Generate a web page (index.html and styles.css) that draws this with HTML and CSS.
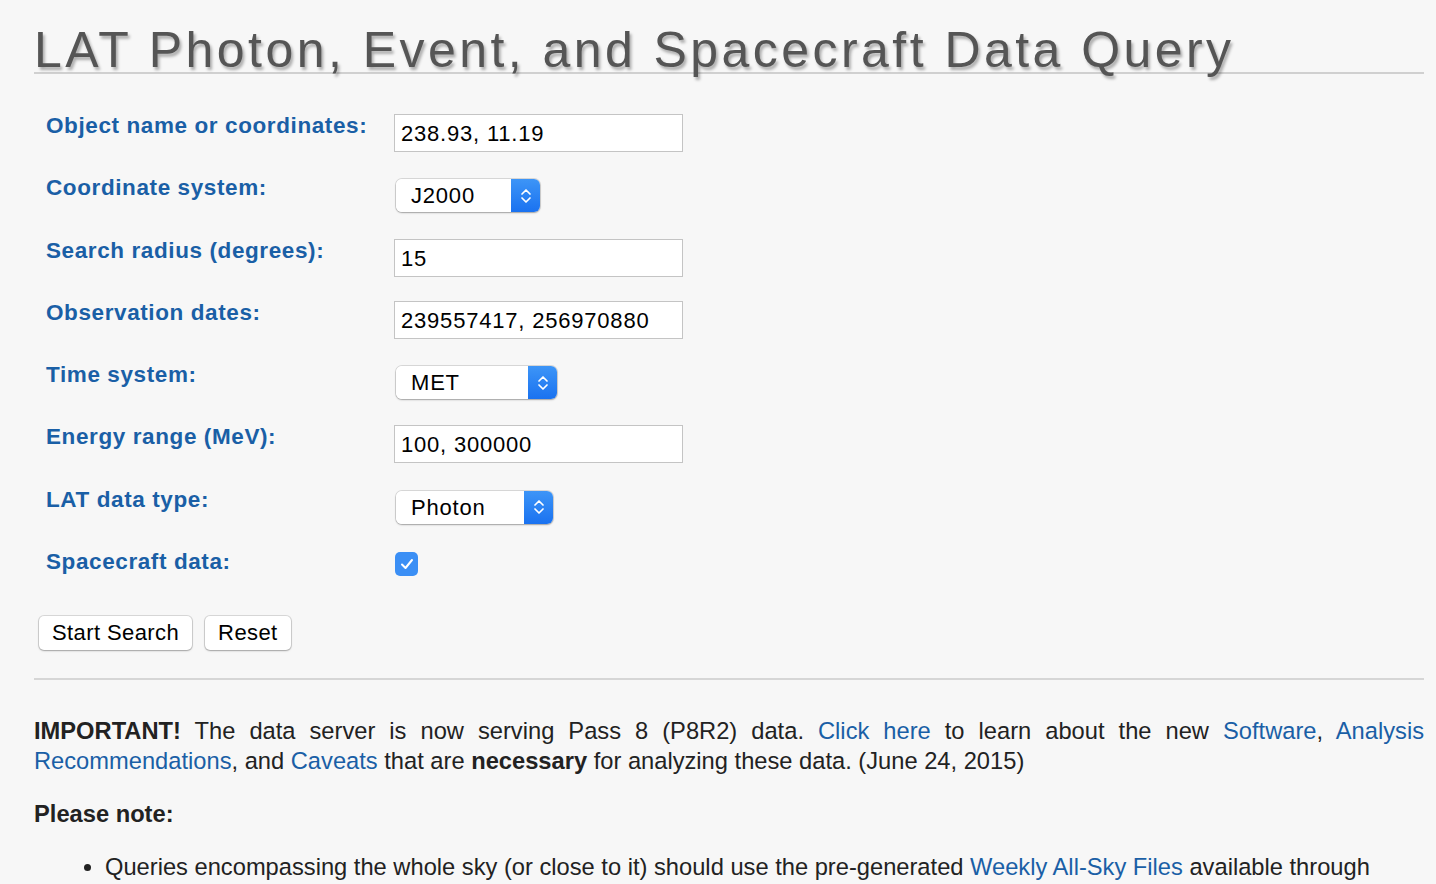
FILE: index.html
```html
<!DOCTYPE html>
<html>
<head>
<meta charset="utf-8">
<title>LAT Data Query</title>
<link rel="stylesheet" href="styles.css">
</head>
<body>
<div class="page">
  <h1 class="title">LAT Photon, Event, and Spacecraft Data Query</h1>

  <form class="query-form">
    <div class="row">
      <label class="label">Object name or coordinates:</label>
      <div class="field"><input class="text-input" type="text" value="238.93, 11.19"></div>
    </div>
    <div class="row">
      <label class="label">Coordinate system:</label>
      <div class="field">
        <span class="select select-j2000">
          <select><option>J2000</option></select>
          <span class="select-arrows"><svg width="12" height="22" viewBox="0 0 12 22"><path d="M2 9 L6 5 L10 9 M2 13 L6 17 L10 13" fill="none" stroke="#fff" stroke-width="1.7" stroke-linecap="round" stroke-linejoin="round"/></svg></span>
        </span>
      </div>
    </div>
    <div class="row">
      <label class="label">Search radius (degrees):</label>
      <div class="field"><input class="text-input" type="text" value="15"></div>
    </div>
    <div class="row">
      <label class="label">Observation dates:</label>
      <div class="field"><input class="text-input" type="text" value="239557417, 256970880"></div>
    </div>
    <div class="row">
      <label class="label">Time system:</label>
      <div class="field">
        <span class="select select-met">
          <select><option>MET</option></select>
          <span class="select-arrows"><svg width="12" height="22" viewBox="0 0 12 22"><path d="M2 9 L6 5 L10 9 M2 13 L6 17 L10 13" fill="none" stroke="#fff" stroke-width="1.7" stroke-linecap="round" stroke-linejoin="round"/></svg></span>
        </span>
      </div>
    </div>
    <div class="row">
      <label class="label">Energy range (MeV):</label>
      <div class="field"><input class="text-input" type="text" value="100, 300000"></div>
    </div>
    <div class="row">
      <label class="label">LAT data type:</label>
      <div class="field">
        <span class="select select-photon">
          <select><option>Photon</option></select>
          <span class="select-arrows"><svg width="12" height="22" viewBox="0 0 12 22"><path d="M2 9 L6 5 L10 9 M2 13 L6 17 L10 13" fill="none" stroke="#fff" stroke-width="1.7" stroke-linecap="round" stroke-linejoin="round"/></svg></span>
        </span>
      </div>
    </div>
    <div class="row">
      <label class="label">Spacecraft data:</label>
      <div class="field">
        <span class="checkbox"><svg width="14" height="12" viewBox="0 0 14 12"><path d="M2 6.5 L5.5 10 L12 2" fill="none" stroke="#fff" stroke-width="2" stroke-linecap="round" stroke-linejoin="round"/></svg></span>
      </div>
    </div>
    <div class="buttons">
      <button type="button" class="btn">Start Search</button>
      <button type="button" class="btn">Reset</button>
    </div>
  </form>

  <hr class="rule">

  <p class="notice"><b>IMPORTANT!</b> The data server is now serving Pass 8 (P8R2) data. <a href="#">Click here</a> to learn about the new <a href="#">Software</a>, <a href="#">Analysis Recommendations</a>, and <a href="#">Caveats</a> that are <b>necessary</b> for analyzing these data. (June 24, 2015)</p>

  <p class="note-head"><b>Please note:</b></p>

  <ul class="notes">
    <li>Queries encompassing the whole sky (or close to it) should use the pre-generated <a href="#">Weekly All-Sky Files</a> available through</li>
  </ul>
</div>
</body>
</html>
```

FILE: styles.css
```css
html, body {
  margin: 0;
  padding: 0;
  background: #f7f7f7;
}
body {
  font-family: "Liberation Sans", Arial, sans-serif;
  color: #222;
  overflow: hidden;
}
.page {
  padding: 0 12px 0 34px;
}
.title {
  margin: 0;
  padding-top: 21px;
  font-size: 50px;
  font-weight: normal;
  letter-spacing: 3.45px;
  color: #555;
  line-height: 58px;
  text-shadow: 2px 3px 3px rgba(0, 0, 0, 0.3);
  border-bottom: 2px solid #d0d0d0;
  height: 51px;
  white-space: nowrap;
}
.query-form {
  padding: 40px 0 0 12px;
}
.row {
  display: grid;
  grid-template-columns: 348px 1fr;
  height: 62.3px;
}
.label {
  font-size: 22.5px;
  letter-spacing: 0.6px;
  font-weight: bold;
  color: #1a5fa6;
  line-height: 24px;
}
.field {
  padding-top: 4px;
}
.text-input {
  box-sizing: border-box;
  width: 289px;
  height: 38px;
  border: 1px solid #c4c4c4;
  background: #fff;
  font-family: "Liberation Sans", Arial, sans-serif;
  font-size: 22px;
  letter-spacing: 0.8px;
  color: #000;
  padding: 2px 6px 0;
  margin: -4px 0 0 0;
  outline: none;
}
.select {
  display: inline-flex;
  margin: -1px 0 0 2px;
  height: 33px;
  box-sizing: border-box;
  border-radius: 6px;
  background: #fff;
  box-shadow: 0 0 0 1px rgba(0,0,0,0.12), 0 1px 2px rgba(0,0,0,0.25);
  overflow: hidden;
}
.select select {
  appearance: none;
  -webkit-appearance: none;
  border: none;
  background: #fff;
  font-family: "Liberation Sans", Arial, sans-serif;
  font-size: 22px;
  letter-spacing: 0.8px;
  color: #000;
  padding: 0 0 0 15px;
  flex: 1;
  min-width: 0;
  outline: none;
}
.select-j2000 { width: 144px; }
.select-met { width: 161px; }
.select-photon { width: 157px; }
.select-arrows {
  width: 29px;
  flex: none;
  display: flex;
  align-items: center;
  justify-content: center;
  background: linear-gradient(#3d95f7, #1a72f0);
}
.checkbox {
  display: inline-flex;
  align-items: center;
  justify-content: center;
  width: 23px;
  height: 24px;
  border-radius: 5px;
  background: #3b8ff5;
  margin: 0 0 0 1px;
  position: relative;
  top: -2px;
}
.buttons {
  display: flex;
  gap: 13px;
  margin: 4px 0 0 -7px;
}
.btn {
  font-family: "Liberation Sans", Arial, sans-serif;
  font-size: 22px;
  letter-spacing: 0.4px;
  color: #000;
  background: #fff;
  border: none;
  border-radius: 5px;
  height: 34px;
  padding: 0 13px;
  box-shadow: 0 0 0 1px rgba(0,0,0,0.12), 0 1px 2px rgba(0,0,0,0.25);
}
.rule {
  border: none;
  border-top: 2px solid #d6d6d6;
  margin: 28px 0 0 0;
}
.notice {
  font-size: 23.7px;
  line-height: 30px;
  text-align: justify;
  margin: 36px 0 0 0;
  color: #222;
}
a {
  color: #1a5fa6;
  text-decoration: none;
}
.note-head {
  font-size: 23.7px;
  line-height: 30px;
  margin: 23px 0 0 0;
}
.notes {
  margin: 23px 0 0 0;
  padding-left: 71px;
  font-size: 23.7px;
  line-height: 30px;
}
```
